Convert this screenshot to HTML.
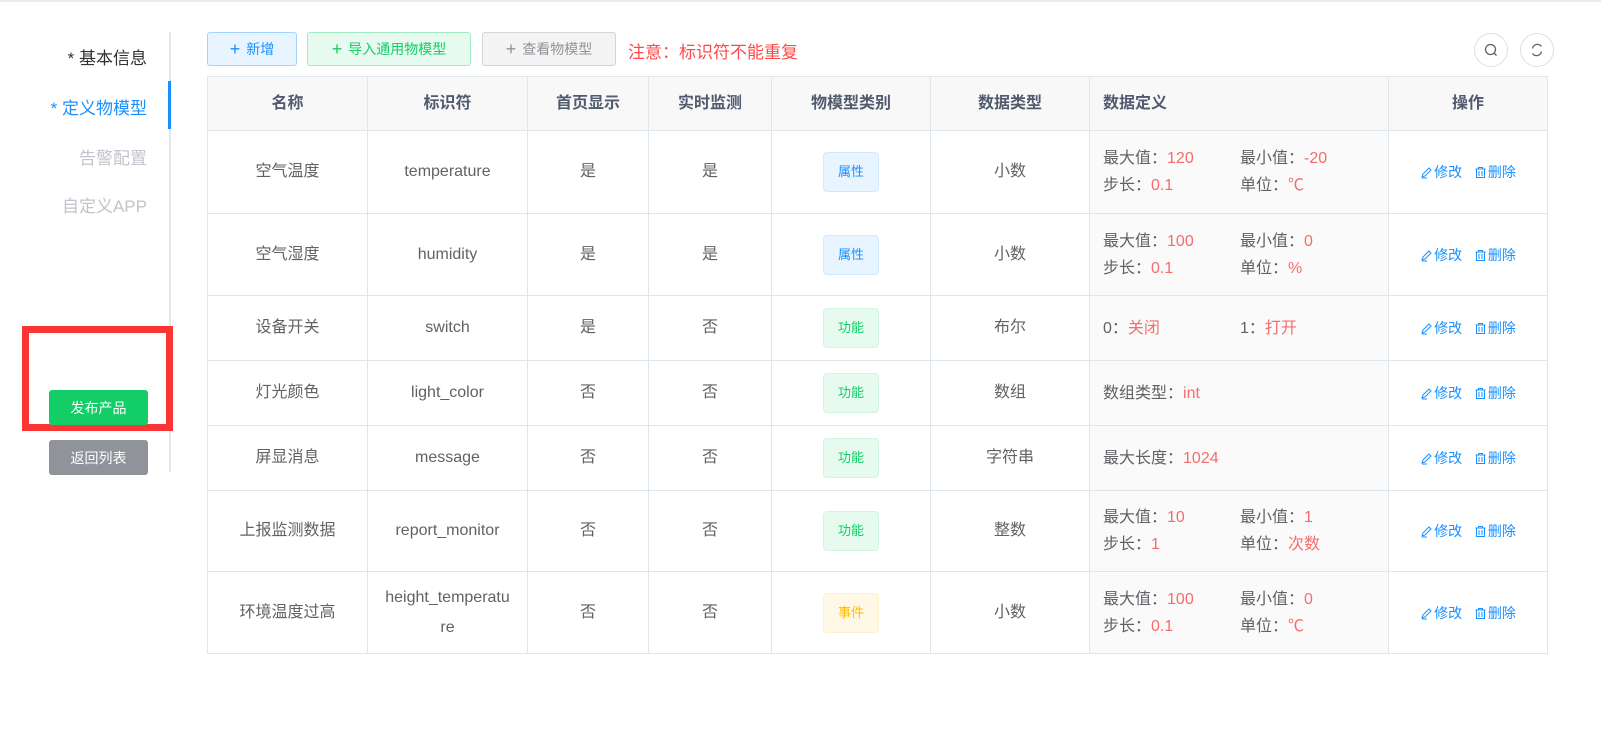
<!DOCTYPE html>
<html><head><meta charset="utf-8"><style>
*{box-sizing:border-box;margin:0;padding:0}
body{width:1601px;height:733px;background:#fff;font-family:"Liberation Sans","Noto Sans CJK SC",sans-serif;color:#606266;position:relative;overflow:hidden}
.topline{position:absolute;left:0;top:0;width:1601px;height:2px;background:#e8ecf2}
.nav{position:absolute;right:1454px;font-size:17px;text-align:right;white-space:nowrap}
.vline{position:absolute;left:169px;top:32px;width:2px;height:440px;background:#e4e7ed}
.act{position:absolute;left:168px;top:81px;width:3px;height:48px;background:#1890ff}
.btn{position:absolute;font-size:14px;border-radius:3px;display:flex;align-items:center;justify-content:center}
.red{position:absolute;left:22px;top:326px;width:151px;height:105px;border:7px solid #fb3434}
table{position:absolute;left:207px;top:76px;border-collapse:collapse;table-layout:fixed;font-size:16px}
td,th{border:1px solid #dfe6ec;text-align:center;color:#606266;padding:0;vertical-align:middle;line-height:22px}
th{background:#f8f8f9;font-weight:bold;height:54px;color:#515a6e}
td.d{background:#fafafa;text-align:left;padding-left:13px;line-height:27px}
.v{color:#f56c6c}
.d span.k{display:inline-block;width:137px}
.tag{display:inline-block;width:56px;height:40px;line-height:38px;border-radius:4px;font-size:13px;border:1px solid}
.tb{background:#e8f4ff;border-color:#d1e9ff;color:#1890ff}
.tg{background:#e7faf0;border-color:#d0f5e0;color:#13ce66}
.ty{background:#fff8e6;border-color:#fff1cc;color:#ffba00}
.op{color:#1890ff;font-size:14px;white-space:nowrap}
.op svg{vertical-align:-2px;margin-right:1px}
.circ{position:absolute;top:33px;width:34px;height:34px;border:1px solid #dcdfe6;border-radius:50%}
</style></head><body>
<div class="topline"></div>
<div class="nav" style="top:44px;color:#303133">* 基本信息</div>
<div class="nav" style="top:94px;color:#1890ff">* 定义物模型</div>
<div class="nav" style="top:144px;color:#c0c4cc">告警配置</div>
<div class="nav" style="top:192px;color:#c0c4cc">自定义APP</div>
<div class="vline"></div><div class="act"></div>
<div class="red"></div>
<div class="btn" style="left:49px;top:390px;width:99px;height:35px;background:#13ce66;color:#fff">发布产品</div>
<div class="btn" style="left:49px;top:440px;width:99px;height:35px;background:#909399;color:#fff">返回列表</div>

<div class="btn" style="left:207px;top:32px;width:90px;height:34px;background:#e8f4ff;border:1px solid #a3d3ff;color:#1890ff"><span style="font-size:18px;margin-right:6px">+</span>新增</div>
<div class="btn" style="left:307px;top:32px;width:164px;height:34px;background:#e7faf0;border:1px solid #a1ebc2;color:#13ce66"><span style="font-size:18px;margin-right:6px">+</span>导入通用物模型</div>
<div class="btn" style="left:482px;top:32px;width:134px;height:34px;background:#f4f4f5;border:1px solid #d3d4d6;color:#909399"><span style="font-size:18px;margin-right:6px">+</span>查看物模型</div>
<div style="position:absolute;left:628px;top:38px;font-size:17px;color:#ff4949">注意：标识符不能重复</div>
<div class="circ" style="left:1474px"><svg width="32" height="32" viewBox="0 0 32 32"><circle cx="15.5" cy="15.5" r="5" fill="none" stroke="#606266" stroke-width="1.3"/><path d="M19 19L21.5 21.5" stroke="#606266" stroke-width="1.3"/></svg></div>
<div class="circ" style="left:1520px"><svg width="32" height="32" viewBox="0 0 32 32"><path d="M11.5 14.5a5 5 0 0 1 9-2M20.5 17.5a5 5 0 0 1-9 2" fill="none" stroke="#606266" stroke-width="1.3"/></svg></div>

<table>
<colgroup><col style="width:160px"><col style="width:160px"><col style="width:121px"><col style="width:123px"><col style="width:159px"><col style="width:159px"><col style="width:299px"><col style="width:159px"></colgroup>
<tr><th>名称</th><th>标识符</th><th>首页显示</th><th>实时监测</th><th>物模型类别</th><th>数据类型</th><th style="text-align:left;padding-left:13px">数据定义</th><th>操作</th></tr>
<tr style="height:83px"><td>空气温度</td><td>temperature</td><td>是</td><td>是</td><td><span class="tag tb">属性</span></td><td>小数</td><td class="d"><span class="k">最大值：<span class="v">120</span></span>最小值：<span class="v">-20</span><br><span class="k">步长：<span class="v">0.1</span></span>单位：<span class="v">℃</span></td><td class="op">OPS</td></tr>
<tr style="height:82px"><td>空气湿度</td><td>humidity</td><td>是</td><td>是</td><td><span class="tag tb">属性</span></td><td>小数</td><td class="d"><span class="k">最大值：<span class="v">100</span></span>最小值：<span class="v">0</span><br><span class="k">步长：<span class="v">0.1</span></span>单位：<span class="v">%</span></td><td class="op">OPS</td></tr>
<tr style="height:65px"><td>设备开关</td><td>switch</td><td>是</td><td>否</td><td><span class="tag tg">功能</span></td><td>布尔</td><td class="d"><span class="k">0：<span class="v">关闭</span></span>1：<span class="v">打开</span></td><td class="op">OPS</td></tr>
<tr style="height:65px"><td>灯光颜色</td><td>light_color</td><td>否</td><td>否</td><td><span class="tag tg">功能</span></td><td>数组</td><td class="d">数组类型：<span class="v">int</span></td><td class="op">OPS</td></tr>
<tr style="height:65px"><td>屏显消息</td><td>message</td><td>否</td><td>否</td><td><span class="tag tg">功能</span></td><td>字符串</td><td class="d">最大长度：<span class="v">1024</span></td><td class="op">OPS</td></tr>
<tr style="height:81px"><td>上报监测数据</td><td>report_monitor</td><td>否</td><td>否</td><td><span class="tag tg">功能</span></td><td>整数</td><td class="d"><span class="k">最大值：<span class="v">10</span></span>最小值：<span class="v">1</span><br><span class="k">步长：<span class="v">1</span></span>单位：<span class="v">次数</span></td><td class="op">OPS</td></tr>
<tr style="height:82px"><td>环境温度过高</td><td style="line-height:30px;padding:0 12px;word-break:break-all">height_temperatu<br>re</td><td>否</td><td>否</td><td><span class="tag ty">事件</span></td><td>小数</td><td class="d"><span class="k">最大值：<span class="v">100</span></span>最小值：<span class="v">0</span><br><span class="k">步长：<span class="v">0.1</span></span>单位：<span class="v">℃</span></td><td class="op">OPS</td></tr>
</table>
<script>
var ops='<svg width="13" height="13" viewBox="0 0 13 13"><path d="M2 11L3 8L9 2L11 4L5 10Z M2 12H7" fill="none" stroke="#1890ff" stroke-width="1"/></svg>修改 &nbsp; <svg width="13" height="13" viewBox="0 0 13 13"><path d="M1.5 3H11.5M4.5 3V1.5H8.5V3M2.5 3V11.5H10.5V3M5 5V10M8 5V10" fill="none" stroke="#1890ff" stroke-width="1"/></svg>删除';
document.querySelectorAll('td.op').forEach(function(e){e.innerHTML=ops;});
</script>
</body></html>
